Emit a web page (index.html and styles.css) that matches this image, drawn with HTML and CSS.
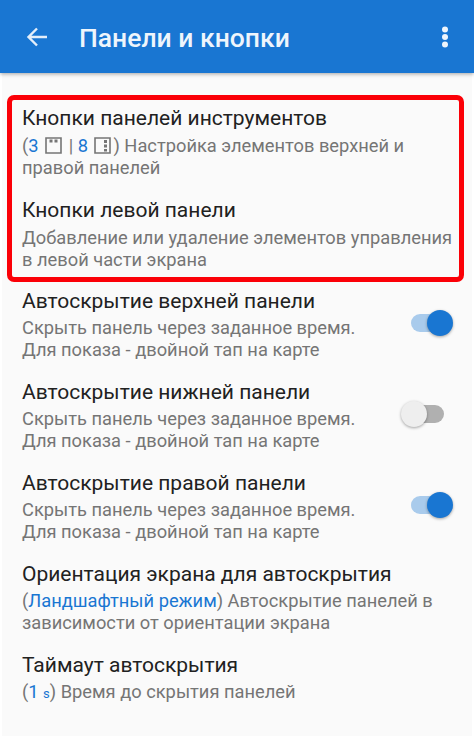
FILE: index.html
```html
<!DOCTYPE html>
<html>
<head>
  <title>Панели и кнопки</title>
  <link rel="stylesheet" href="styles.css">
</head>
<body>
  <div class="toolbar">
    <svg class="back" width="22" height="20" viewBox="0 0 22 20"><path d="M21 10H3M11 1.500L2.500 10l8.500 8.500" fill="none" stroke="#e3eefa" stroke-width="2.400"/></svg>
    <div class="title">Панели и кнопки</div>
    <svg class="more" width="8" height="22" viewBox="0 0 8 22"><circle cx="4" cy="3.500" r="3"/><circle cx="4" cy="11" r="3"/><circle cx="4" cy="18.500" r="3"/></svg>
  </div>
  <div class="list">
    <div class="marked">
      <div class="item first">
        <div class="name">Кнопки панелей инструментов</div>
        <div class="desc">(<span class="val">3</span> <svg class="ico" width="17" height="17" viewBox="0 0 17 17"><path d="M1 1h15v15H1z" fill="none" stroke="#757575" stroke-width="1.600"/><path d="M4.500 2.500h3v3h-3zM9.500 2.500h3v3h-3z" fill="#757575"/></svg> | <span class="val">8</span> <svg class="ico" width="17" height="17" viewBox="0 0 17 17"><path d="M1 1h15v15H1z" fill="none" stroke="#757575" stroke-width="1.600"/><path d="M10 3h3v3h-3zM10 7.500h3v3h-3zM10 12h3v2.500h-3z" fill="#757575"/></svg>) Настройка элементов верхней и правой панелей</div>
      </div>
      <div class="item">
        <div class="name">Кнопки левой панели</div>
        <div class="desc">Добавление или удаление элементов управления в левой части экрана</div>
      </div>
    </div>
    <div class="item row">
      <div class="text">
        <div class="name">Автоскрытие верхней панели</div>
        <div class="desc">Скрыть панель через заданное время.<br>Для показа - двойной тап на карте</div>
      </div>
      <div class="switch on"><span class="track"></span><span class="knob"></span></div>
    </div>
    <div class="item row">
      <div class="text">
        <div class="name">Автоскрытие нижней панели</div>
        <div class="desc">Скрыть панель через заданное время.<br>Для показа - двойной тап на карте</div>
      </div>
      <div class="switch"><span class="track"></span><span class="knob"></span></div>
    </div>
    <div class="item row">
      <div class="text">
        <div class="name">Автоскрытие правой панели</div>
        <div class="desc">Скрыть панель через заданное время.<br>Для показа - двойной тап на карте</div>
      </div>
      <div class="switch on"><span class="track"></span><span class="knob"></span></div>
    </div>
    <div class="item">
      <div class="name">Ориентация экрана для автоскрытия</div>
      <div class="desc">(<span class="val">Ландшафтный режим</span>) Автоскрытие панелей в зависимости от ориентации экрана</div>
    </div>
    <div class="item">
      <div class="name">Таймаут автоскрытия</div>
      <div class="desc">(<span class="val">1 <small>s</small></span>) Время до скрытия панелей</div>
    </div>
  </div>
</body>
</html>
```

FILE: styles.css
```css
html, body {
  margin: 0;
  height: 100%;
}
body {
  width: 474px;
  height: 739px;
  overflow: hidden;
  background: #ffffff;
  font-family: Roboto, sans-serif;
}
.toolbar {
  position: relative;
  display: flex;
  align-items: center;
  box-sizing: border-box;
  height: 73px;
  padding: 0 25px 0 26px;
  background: #1976d2;
  box-shadow: 0 1px 4px rgba(0, 0, 0, 0.35);
}
.title {
  flex: 1;
  margin: 2px 0 0 31px;
  color: #eef5fc;
  font-size: 26.500px;
  font-weight: 500;
}
.more {
  fill: #eef5fc;
}
.list {
  box-sizing: border-box;
  height: 663px;
  margin: 0 2px;
  padding: 22px 8px 0 5px;
  background: #fafafa;
}
.marked {
  box-sizing: border-box;
  width: 457px;
  height: 187px;
  margin-bottom: 5px;
  padding: 4px 0 0 0;
  border: 5px solid #fb0007;
  border-radius: 7px;
}
.item {
  height: 91px;
  padding: 0 0 0 10px;
}
.marked .first {
  height: 92px;
}
.list > .item {
  padding: 0 11px 0 15px;
}
.row {
  display: flex;
  align-items: center;
}
.row .text {
  flex: 1;
  align-self: flex-start;
}
.name {
  color: #212121;
  font-size: 21px;
  line-height: 28px;
}
.desc {
  color: #757575;
  font-size: 18.300px;
  line-height: 21.500px;
  margin-top: 3px;
}
.list > .item .desc {
  margin-top: 2px;
}
.val {
  color: #1976d2;
}
.val small {
  font-size: 13px;
}
.ico {
  vertical-align: -2px;
  margin: 0 2px;
}
.switch {
  position: relative;
  flex: none;
  width: 52px;
  height: 26px;
  margin: 0 0 19px 0;
}
.track {
  position: absolute;
  left: 10px;
  top: 4px;
  width: 33px;
  height: 18px;
  border-radius: 9px;
  background: #b0b0b0;
}
.knob {
  position: absolute;
  left: 0;
  top: 0;
  width: 26px;
  height: 26px;
  border-radius: 50%;
  background: #eeeeee;
  box-shadow: 0 1px 3px rgba(0, 0, 0, 0.35);
}
.on .track {
  background: #a9cbec;
}
.on .knob {
  left: 26px;
  background: #1976d2;
}
```
